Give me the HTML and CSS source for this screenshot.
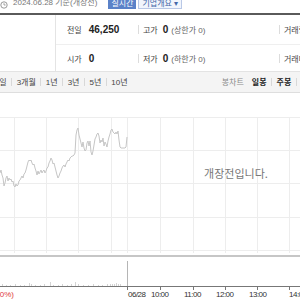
FILE: index.html
```html
<!DOCTYPE html>
<html lang="ko">
<head>
<meta charset="utf-8">
<link rel="stylesheet" href="styles.css">
</head>
<body>
<div class="page">
  <div class="topbar">
    <div class="topline">
      <svg class="clock" width="8" height="8" viewBox="0 0 8 8"><circle cx="4" cy="4" r="3.2" fill="none" stroke="#999" stroke-width="1"/><path d="M4 2.2V4h1.6" fill="none" stroke="#999" stroke-width="0.9"/></svg>
      <span class="date">2024.06.28 기준(개장전)</span>
      <span class="btn-rt">실시간</span>
      <span class="btn-co">기업개요 ▾</span>
    </div>
  </div>
  <div class="info">
    <div class="side"></div>
    <div class="rows">
      <div class="row r1">
        <div class="cell c1"><span class="lb">전일</span><b class="val">46,250</b></div>
        <div class="cell c2"><span class="sep"></span><span class="lb">고가</span><b class="val v0">0</b><span class="sub">(상한가 0)</span></div>
        <div class="cell c3"><span class="sep"></span><span class="lb">거래량</span></div>
      </div>
      <div class="row r2">
        <div class="cell c1"><span class="lb">시가</span><b class="val">0</b></div>
        <div class="cell c2"><span class="sep"></span><span class="lb">저가</span><b class="val v0">0</b><span class="sub">(하한가 0)</span></div>
        <div class="cell c3"><span class="sep"></span><span class="lb">거래대금</span></div>
      </div>
    </div>
  </div>
  <div class="tabs">
    <div class="periods">
      <span class="tab">1주일</span><span class="tsep"></span>
      <span class="tab">3개월</span><span class="tsep"></span>
      <span class="tab">1년</span><span class="tsep"></span>
      <span class="tab">3년</span><span class="tsep"></span>
      <span class="tab">5년</span><span class="tsep"></span>
      <span class="tab">10년</span>
    </div>
    <div class="kinds">
      <span class="kind-label">봉차트</span>
      <span class="kind">일봉</span><span class="tsep"></span>
      <span class="kind">주봉</span><span class="tsep"></span>
      <span class="kind">월봉</span>
    </div>
  </div>
  <svg class="chart" width="300" height="207" viewBox="0 93 300 207">
    <g stroke="#ededed" stroke-width="1" fill="none">
      <path d="M0 117.5H300M0 150.5H300M0 183.5H300M0 217.5H300M0 250.5H300"/>
      <path d="M14.5 117V253M46.5 117V253M78.5 117V253M111.5 117V253M127.5 117V253M160.5 117V253M193.5 117V253M225.5 117V253M257.5 117V253M289.5 117V253"/>
    </g>
    <polyline fill="none" stroke="#c6c6c6" stroke-width="1" stroke-linejoin="round" points="0,173 1,170 2,175 3,178 4,186 5,183 6,178 7,176 8,181 9,178 10,180 11,179 12,182 13,181 14,186 15,187 16,184 17,186 18,185 19,181 20,180 21,178 22,176 23,178 24,174 25,173 26,170 27,166 28,162 29,160 30,161 31,160 32,163 33,165 34,164 35,168 36,171 37,175 38,171 39,174 40,172 41,170 42,173 43,171 44,170 45,173 46,171 47,168 48,167 49,163 50,161 51,158 52,160 53,164 54,163 55,167 56,171 57,175 58,178 59,176 60,173 61,171 62,168 63,166 64,165 65,167 66,164 67,162 68,160 69,161 70,158 71,157 72,156 73,156 74,155 75,153 76,135 77,130 78,128 79,135 80,139 81,143 82,147 83,142 84,148 85,151 86,150 87,143 88,141 89,146 90,141 91,152 92,155 93,151 94,145 95,139 96,137 97,134 98,133 99,136 100,143 101,140 102,142 103,138 104,146 105,142 106,144 107,147 108,141 109,137 110,134 111,130 112,129 113,132 114,133 115,134 116,132 117,134 118,131 119,140 120,147 121,148 122,148 123,148 124,148 125,148 126,147 127,137"/>
    <text class="notice" x="236" y="178" text-anchor="middle">개장전입니다.</text>
    <rect x="0" y="255" width="300" height="2" fill="#c6c6c6"/>
    <path stroke="#d4d4d4" stroke-width="1" fill="none" d="M2.5 286v-2M6.5 286v-1M10.5 286v-1M15.5 286v-2M20.5 286v-1M24.5 286v-1M29.5 286v-3M31.5 286v-2M35.5 286v-1M40.5 286v-1M44.5 286v-2M50.5 286v-4M53.5 286v-1M58.5 286v-1M62.5 286v-2M67.5 286v-1M71.5 286v-2M75.5 286v-4M78.5 286v-2M83.5 286v-1M88.5 286v-1M93.5 286v-2M98.5 286v-1M102.5 286v-1M107.5 286v-2M110.5 286v-2M112.5 286v-2M114.5 286v-2M116.5 286v-3M118.5 286v-2M120.5 286v-2"/>
    <path stroke="#b5b5b5" stroke-width="1" d="M127.5 286V261"/>
    <path stroke="#777" stroke-width="1" fill="none" d="M0 286.5H300M127.5 286V290M160.5 286V290M193.5 286V290M225.5 286V290M257.5 286V290M289.5 286V290"/>
    <g class="axis">
      <text x="128" y="297">06/28</text>
      <text x="151" y="297">10:00</text>
      <text x="184" y="297">11:00</text>
      <text x="216" y="297">12:00</text>
      <text x="249" y="297">13:00</text>
      <text x="289" y="297">14:00</text>
    </g>
    <text class="pct" x="14" y="297" text-anchor="end">(0%)</text>
  </svg>
</div>
</body>
</html>
```

FILE: styles.css
```css
* { box-sizing: border-box; }
body {
  margin: 0;
  background: #fff;
  font-family: "Liberation Sans", "Noto Sans CJK KR", sans-serif;
  color: #333;
}
.page {
  width: 300px;
  height: 300px;
  overflow: hidden;
}
.topbar {
  height: 15px;
  border-bottom: 2px solid #5a5a5a;
  overflow: hidden;
}
.topline {
  display: flex;
  align-items: center;
  height: 12px;
  margin-top: -3px;
  font-size: 8px;
  color: #777;
  white-space: nowrap;
}
.clock {
  margin: 3px 5px 0 0;
  flex: none;
}
.date {
  line-height: 12px;
}
.btn-rt {
  margin-left: 11px;
  height: 11px;
  padding: 0 3px;
  background: #5b82c8;
  color: #fff;
  line-height: 11px;
}
.btn-co {
  margin-left: 2px;
  height: 11px;
  padding: 0 3px;
  background: #f1f5fc;
  border: 1px solid #b9c8e6;
  color: #4468a8;
  line-height: 9px;
}
.info {
  display: flex;
  height: 56px;
}
.side {
  flex: none;
  width: 56px;
  border-right: 1px solid #e4e4e4;
}
.rows {
  flex: 1;
  min-width: 0;
  display: flex;
  flex-direction: column;
}
.row {
  display: flex;
  align-items: center;
}
.r1 {
  height: 30px;
  border-bottom: 1px solid #efefef;
}
.r2 {
  height: 26px;
}
.cell {
  display: flex;
  align-items: center;
  white-space: nowrap;
  font-size: 8px;
}
.c1 { flex: none; width: 82px; padding-left: 11px; }
.c2 { flex: none; width: 141px; }
.c3 { flex: 1; min-width: 0; overflow: hidden; }
.sep {
  flex: none;
  width: 1px;
  height: 9px;
  background: #dcdcdc;
  margin-right: 4px;
}
.lb {
  color: #444;
  font-size: 8px;
}
.val {
  font-size: 10px;
  color: #222;
  margin-left: 7px;
}
.v0 { margin-left: 5px; }
.sub {
  margin-left: 3px;
  color: #666;
  font-size: 8px;
}
.tabs {
  height: 22px;
  display: flex;
  align-items: center;
  justify-content: space-between;
  background: #f4f4f4;
  border-top: 1px solid #e3e3e3;
  border-bottom: 1px solid #dedede;
  padding-bottom: 1px;
  font-size: 8px;
  white-space: nowrap;
}
.periods, .kinds {
  display: flex;
  align-items: center;
}
.periods {
  margin-left: -12.5px;
  color: #444;
}
.tsep {
  width: 1px;
  height: 8px;
  background: #d8d8d8;
  margin: 0 4.5px;
}
.kinds {
  margin-right: -16px;
  color: #222;
  font-weight: bold;
}
.kind-label {
  color: #8a8a8a;
  font-weight: normal;
  margin-right: 8px;
}
.chart {
  display: block;
}
.notice {
  font-family: "Noto Sans CJK KR", sans-serif;
  font-size: 11px;
  fill: #777;
}
.axis text {
  font-family: "Liberation Sans", sans-serif;
  font-size: 8px;
  letter-spacing: -0.5px;
  fill: #333;
}
.pct {
  font-family: "Liberation Sans", sans-serif;
  font-size: 8px;
  fill: #e0393e;
}
```
